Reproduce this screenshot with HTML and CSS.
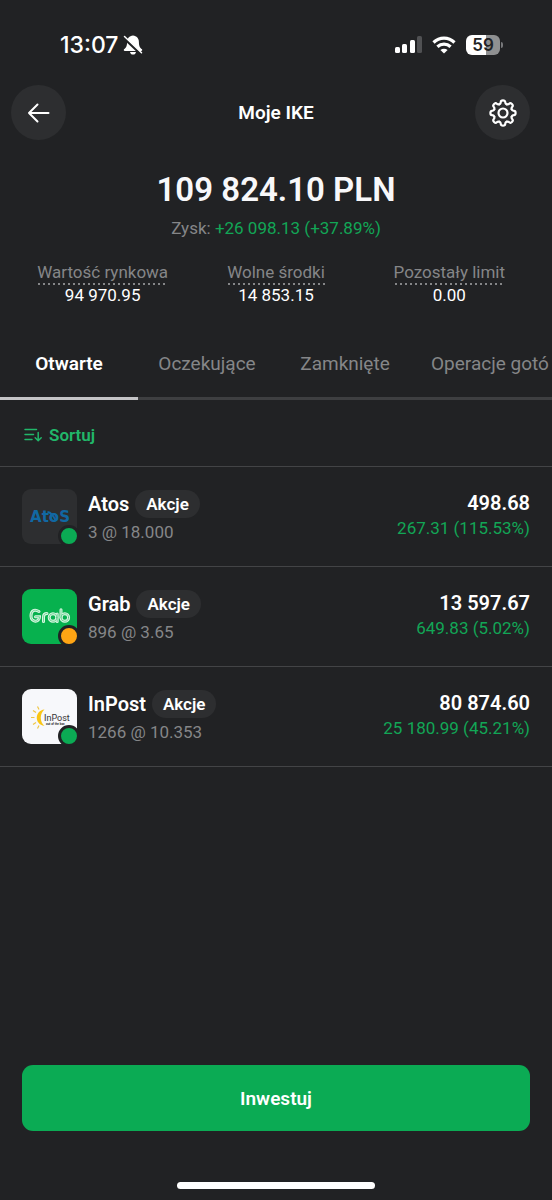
FILE: index.html
```html
<!DOCTYPE html>
<html lang="pl">
<head>
<meta charset="utf-8">
<meta name="viewport" content="width=device-width, initial-scale=1">
<title>Moje IKE</title>
<link rel="stylesheet" href="styles.css">
</head>
<body>
<div class="app">
  <div class="status">
    <div class="status-time">
      <span>13:07</span>
      <svg class="bell" width="22" height="22" viewBox="0 0 22 22" aria-hidden="true">
        <path d="M11 1.600c-3.700.5-5.900 3-5.900 6.300 0 4.400-1.200 5.800-2.900 7.200-.9.900-.4 1.800.7 1.800h16.200c1.100 0 1.600-.9.700-1.800-1.700-1.400-2.900-2.800-2.900-7.200 0-3.300-2.200-5.800-5.900-6.300z" fill="#fff"/>
        <path d="M8 18h6c-.3 1.700-1.400 2.600-3 2.600S8.300 19.700 8 18z" fill="#fff"/>
        <path d="M1.500 3.500L18 19" stroke="#212224" stroke-width="3"/>
        <path d="M2.500 2.500L19.500 18.800" stroke="#fff" stroke-width="1.500" stroke-linecap="round"/>
      </svg>
    </div>
    <div class="status-icons">
      <svg width="27" height="18" viewBox="0 0 27 18" aria-hidden="true" fill="#fff">
        <rect x="0" y="11" width="5" height="6" rx="1.500"/>
        <rect x="7" y="8" width="5" height="9" rx="1.500"/>
        <rect x="15" y="4" width="5" height="13" rx="1.500"/>
        <rect x="22" y="0" width="5" height="17" rx="1.500" fill="#505153"/>
      </svg>
      <svg width="24" height="18" viewBox="0 0 24 18" aria-hidden="true" fill="none" stroke="#fff" stroke-width="3.200">
        <path d="M1.500 6.500C7.500.7 16.500.7 22.500 6.500"/>
        <path d="M5.400 10.700c3.800-3.500 9.400-3.500 13.200 0"/>
        <path d="M12 17.500L8.400 13.900c2.100-1.700 5.100-1.700 7.200 0z" fill="#fff" stroke="none"/>
      </svg>
      <div class="battery"><span class="battery-level">59</span><span class="battery-tip"></span></div>
    </div>
  </div>

  <header class="header">
    <button class="round" type="button" aria-label="Wstecz">
      <svg width="24" height="24" viewBox="0 0 24 24" aria-hidden="true" fill="none" stroke="#fff" stroke-width="2" stroke-linecap="round" stroke-linejoin="round"><path d="M21.500 12H2M10.500 3.500L2 12l8.500 8.500"/></svg>
    </button>
    <h1 class="title">Moje IKE</h1>
    <button class="round" type="button" aria-label="Ustawienia">
      <svg width="28" height="28" viewBox="-14 -14 28 28" aria-hidden="true" fill="none" stroke="#fff" stroke-width="2.200" stroke-linecap="round">
        <defs><path id="tooth" d="M-3.600-8.700C-2.500-9.200-2.200-9.800-2.200-11Q-2.200-12.600 0-12.600Q2.200-12.600 2.200-11C2.200-9.800 2.500-9.200 3.600-8.700"/></defs>
        <use href="#tooth"/><use href="#tooth" transform="rotate(45)"/><use href="#tooth" transform="rotate(90)"/><use href="#tooth" transform="rotate(135)"/><use href="#tooth" transform="rotate(180)"/><use href="#tooth" transform="rotate(225)"/><use href="#tooth" transform="rotate(270)"/><use href="#tooth" transform="rotate(315)"/>
        <circle r="4.500"/>
      </svg>
    </button>
  </header>

  <section class="summary">
    <div class="total">109 824.10 PLN</div>
    <div class="profit">Zysk: <span class="gain">+26 098.13 (+37.89%)</span></div>
    <dl class="stats">
      <div class="stat"><dt>Wartość rynkowa</dt><dd>94 970.95</dd></div>
      <div class="stat"><dt>Wolne środki</dt><dd>14 853.15</dd></div>
      <div class="stat"><dt>Pozostały limit</dt><dd>0.00</dd></div>
    </dl>
  </section>

  <nav class="tabs">
    <a class="tab tab-active" href="#otwarte" aria-current="page">Otwarte</a>
    <a class="tab" href="#oczekujace">Oczekujące</a>
    <a class="tab" href="#zamkniete">Zamknięte</a>
    <a class="tab" href="#operacje">Operacje gotó</a>
  </nav>

  <div class="sortbar">
    <button class="sort" type="button">
      <svg width="18" height="14" viewBox="0 0 18 14" aria-hidden="true" fill="none" stroke="#21b76a" stroke-width="1.500" stroke-linecap="round" stroke-linejoin="round"><path d="M1 1.500h11.500M1 6.500h8.500M1 11.500h7M14.200 4.500v8M11.200 9.700l3 3 3-3"/></svg>
      Sortuj
    </button>
  </div>

  <ul class="positions">
    <li class="position">
      <div class="logo logo-atos">
        <svg width="55" height="55" viewBox="0 0 55 55" aria-hidden="true"><text class="atos-text" x="28" y="33" text-anchor="middle">AtoS</text><path d="M25.500 23c3.500.5 6 3.500 8 8.500" fill="none" stroke="#1168a3" stroke-width="2"/></svg>
        <span class="dot"></span>
      </div>
      <div class="info">
        <div class="name-row"><span class="name">Atos</span><span class="tag">Akcje</span></div>
        <div class="quantity">3 @ 18.000</div>
      </div>
      <div class="amounts"><div class="value">498.68</div><div class="gain">267.31 (115.53%)</div></div>
    </li>
    <li class="position">
      <div class="logo logo-grab">
        <svg width="55" height="55" viewBox="0 0 55 55" aria-hidden="true" fill="none" stroke-linecap="round">
          <defs><g id="grab-mark"><path d="M17 22.500c-5-3-8-.5-8 4.500 0 6.500 8.500 7 8.500.8h-4"/><path d="M21.500 32.500v-4.500c0-2.800 1.500-3.600 3.500-3.600"/><circle cx="31" cy="28.500" r="3.800"/><path d="M35.200 25V32.500M39 20.800v8"/><circle cx="42.800" cy="28.500" r="3.800"/></g></defs>
          <use href="#grab-mark" stroke="#d9f7e2" stroke-width="3"/>
          <use href="#grab-mark" stroke="#4cc67b" stroke-width="0.700"/>
        </svg>
        <span class="dot dot-orange"></span>
      </div>
      <div class="info">
        <div class="name-row"><span class="name">Grab</span><span class="tag">Akcje</span></div>
        <div class="quantity">896 @ 3.65</div>
      </div>
      <div class="amounts"><div class="value">13 597.67</div><div class="gain">649.83 (5.02%)</div></div>
    </li>
    <li class="position">
      <div class="logo logo-inpost">
        <svg width="55" height="55" viewBox="0 0 55 55" aria-hidden="true">
          <path d="M22.500 20.500c-10 1-10.500 15 0 16.300-5-3.500-5-12.500 0-16.300z" fill="#f9c515"/>
          <path d="M15.500 17.500l1.500 3M11 21.500l3 2M9 28.500h3.500M11 35.500l3-2M15.500 39.500l1.500-3" stroke="#efc646" stroke-width="1.200"/>
          <text class="inpost-text" x="22" y="32">InPost</text>
          <text class="inpost-sub" x="24" y="36">out of the box</text>
        </svg>
        <span class="dot"></span>
      </div>
      <div class="info">
        <div class="name-row"><span class="name">InPost</span><span class="tag">Akcje</span></div>
        <div class="quantity">1266 @ 10.353</div>
      </div>
      <div class="amounts"><div class="value">80 874.60</div><div class="gain">25 180.99 (45.21%)</div></div>
    </li>
  </ul>

  <footer class="footer">
    <button class="invest" type="button">Inwestuj</button>
    <div class="home"></div>
  </footer>
</div>
</body>
</html>
```

FILE: styles.css
```css
* { box-sizing: border-box; }
body {
  margin: 0;
  background: #212224;
  color: #fff;
  font-family: Roboto, "Liberation Sans", sans-serif;
  font-size: 17px;
  line-height: 22px;
}
button { border: 0; padding: 0; font-family: inherit; color: inherit; cursor: pointer; }
svg { display: block; flex: none; }
.app { min-height: 100vh; display: flex; flex-direction: column; overflow: hidden; }

.status {
  display: flex;
  justify-content: space-between;
  align-items: center;
  padding: 30px 49px 0 60px;
  height: 60px;
}
.status-time {
  display: flex;
  align-items: center;
  gap: 4px;
  font-family: Inter, sans-serif;
  font-size: 23px;
  font-weight: 500;
}
.status-icons { display: flex; align-items: center; gap: 10px; }
.battery { display: flex; align-items: center; gap: 1px; }
.battery-level {
  width: 34px;
  height: 20px;
  border-radius: 6px;
  background: linear-gradient(90deg, #fff 59%, #8f9091 59%);
  color: #212224;
  font-family: Inter, sans-serif;
  font-size: 17px;
  line-height: 20px;
  font-weight: 600;
  text-align: center;
}
.battery-tip { width: 2px; height: 6px; border-radius: 0 2px 2px 0; background: #77787a; }

.header {
  display: flex;
  justify-content: space-between;
  align-items: center;
  padding: 25px 22px 0 11px;
}
.round {
  display: flex;
  align-items: center;
  justify-content: center;
  width: 55px;
  height: 55px;
  border-radius: 50%;
  background: #2d2e30;
}
.title { margin: 0; padding-left: 11px; font-size: 19px; font-weight: 600; }

.summary { padding: 28px 16px 0; text-align: center; }
.total { font-size: 33px; line-height: 43px; font-weight: 600; color: #f8f8fa; }
.profit { margin-top: 6px; color: #858688; }
.gain { color: #12a656; }
.stats { display: grid; grid-template-columns: repeat(3, 1fr); margin: 22px 0 0; }
.stat { display: flex; flex-direction: column; align-items: center; }
.stat dt {
  padding-bottom: 2px;
  line-height: 22px;
  background: radial-gradient(circle at 2px 1px, #858688 1px, transparent 1px) left bottom / 5px 2px repeat-x;
}
.stat dt { color: #858688; }
.stat dd { margin: 0; line-height: 20px; }

.tabs { display: flex; margin-top: 26px; overflow: hidden; }
.tab {
  flex: 0 0 auto;
  min-width: 25%;
  padding: 22px 17px;
  border-bottom: 3px solid #3e3f41;
  color: #858688;
  font-size: 19px;
  text-align: center;
  text-decoration: none;
  white-space: nowrap;
}
.tab-active { color: #fff; font-weight: 600; border-bottom-color: #c4c4c6; }

.sortbar { display: flex; padding: 24px 24px 20px; border-bottom: 1px solid #434446; }
.sort {
  display: flex;
  align-items: center;
  gap: 7px;
  background: none;
  color: #21b76a;
  font-size: 17px;
  line-height: 22px;
  font-weight: 600;
}

.positions { margin: 0; padding: 0; list-style: none; }
.position {
  display: flex;
  align-items: flex-start;
  gap: 11px;
  padding: 22px;
  border-bottom: 1px solid #434446;
}
.logo { position: relative; width: 55px; height: 55px; border-radius: 9px; flex: none; }
.logo-atos { background: #2d2e30; }
.logo-grab { background: #07b14e; }
.logo-inpost { background: #f7f8fb; }
.dot {
  position: absolute;
  right: -3px;
  bottom: -3px;
  width: 22px;
  height: 22px;
  border: 3px solid #212224;
  border-radius: 50%;
  background: #0bab54;
}
.dot-orange { background: #ffa514; }
.atos-text { font-family: "DejaVu Sans", sans-serif; font-size: 15px; font-weight: 700; fill: #1168a3; }
.inpost-text { font-family: Roboto, sans-serif; font-size: 9px; font-weight: 400; fill: #333; }
.inpost-sub { font-family: Roboto, sans-serif; font-size: 3px; font-weight: 700; fill: #333; }
.info { flex: 1; }
.name-row { display: flex; align-items: center; gap: 6px; height: 30px; }
.name { font-size: 20px; font-weight: 600; }
.tag {
  padding: 0 11px;
  border-radius: 14px;
  background: #2d2e30;
  line-height: 28px;
  font-weight: 600;
}
.quantity { margin-top: 2px; color: #858688; }
.amounts { text-align: right; }
.value { font-size: 20px; line-height: 28px; font-weight: 600; }

.footer {
  display: flex;
  flex-direction: column;
  align-items: center;
  margin-top: auto;
  padding: 0 22px 11px;
  gap: 51px;
}
.invest {
  width: 100%;
  height: 66px;
  border-radius: 11px;
  background: #0bab54;
  font-size: 19px;
  font-weight: 600;
}
.home { width: 198px; max-width: 50%; height: 7px; border-radius: 4px; background: #fff; }
```
